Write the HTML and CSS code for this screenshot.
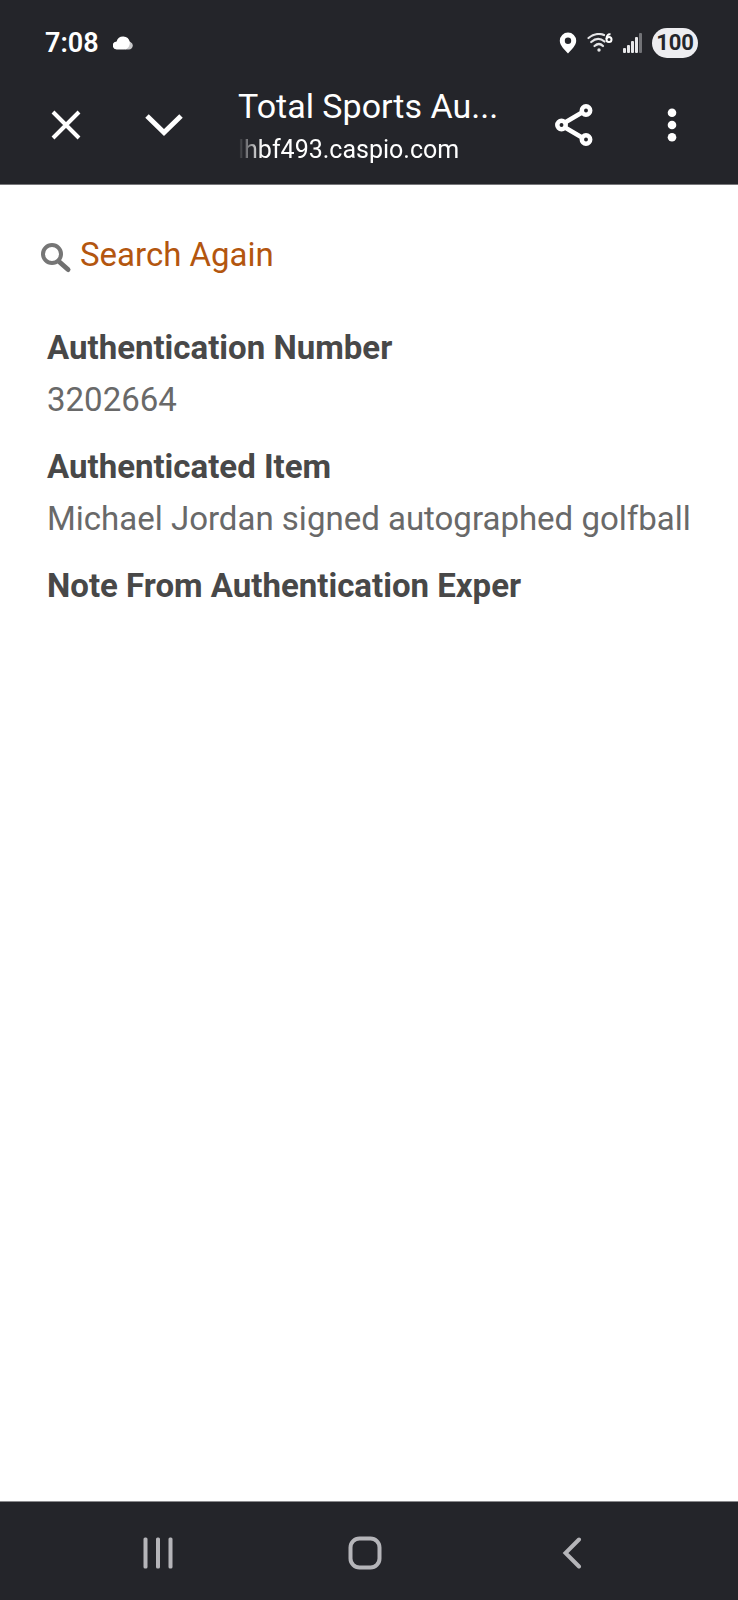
FILE: index.html
```html
<!DOCTYPE html>
<html lang="en">
<head>
    <meta charset="UTF-8">
    <meta name="viewport" content="width=device-width, initial-scale=1.0">
    <title>Total Sports Authentication</title>
    <link rel="stylesheet" href="styles.css">
</head>
<body>
    <header class="top">
        <div class="status-bar">
            <span class="time">7:08</span>
            <svg class="cloud" width="20" height="14" viewBox="0 0 20 14">
                <path d="M12 13.5h4a4 4 0 0 0 1.5-7.6L13 4z" fill="#c8c8ca"/>
                <path d="M4 13.5a4 4 0 0 1-.4-8A6.8 6.8 0 0 1 16.8 6c.4 4-2.3 7.5-5.3 7.5z" fill="#fff"/>
            </svg>
            <div class="status-icons">
                <svg width="18" height="22" viewBox="0 0 18 22">
                    <path fill="#fff" fill-rule="evenodd" d="M9 .5a8.2 8.2 0 0 1 8.2 8.2C17.2 13.5 12.5 17.5 9 21.5 5.5 17.5.8 13.5.8 8.7A8.2 8.2 0 0 1 9 .5zM9 5.5a3.2 3.2 0 1 0 0 6.4 3.2 3.2 0 0 0 0-6.4z"/>
                </svg>
                <svg width="26" height="20" viewBox="0 0 26 20">
                    <g fill="none" stroke="#e4e4e6" stroke-width="2.2" stroke-linecap="round">
                        <path d="M1.5 5Q9-1 17 2"/>
                        <path d="M4.2 9Q11 3 17.5 8.5"/>
                        <path d="M7.5 13Q12 9 16 13"/>
                    </g>
                    <circle cx="12" cy="17" r="1.7" fill="#e4e4e6"/>
                    <path d="M23.5 1.3Q19.5 1 19.5 6" fill="none" stroke="#fff" stroke-width="2"/>
                    <circle cx="22" cy="6.5" r="2.5" fill="none" stroke="#fff" stroke-width="2"/>
                </svg>
                <svg width="19" height="20" viewBox="0 0 19 20">
                    <g fill="#e8e8ea">
                        <rect x="0" y="15" width="3" height="5" rx="1"/>
                        <rect x="4" y="12" width="3" height="8" rx="1"/>
                        <rect x="8" y="8" width="3" height="12" rx="1"/>
                        <rect x="12" y="4" width="3" height="16" rx="1"/>
                    </g>
                    <rect x="16" y="0" width="3" height="20" rx="1" fill="#727377"/>
                </svg>
                <span class="battery">100</span>
            </div>
        </div>

        <div class="app-bar">
            <button class="icon-button" type="button" aria-label="Close">
                <svg width="30" height="30" viewBox="0 0 30 30">
                    <path d="M2 2l26 26M28 2L2 28" stroke="#fff" stroke-width="4"/>
                </svg>
            </button>
            <button class="icon-button" type="button" aria-label="Minimize">
                <svg width="38" height="24" viewBox="0 0 38 24">
                    <path d="M2 3l17 16.5L36 3" fill="none" stroke="#fff" stroke-width="5"/>
                </svg>
            </button>
            <div class="page-info">
                <div class="page-title">Total Sports Au...</div>
                <div class="page-url">lhbf493.caspio.com</div>
            </div>
            <button class="icon-button" type="button" aria-label="Share">
                <svg width="38" height="42" viewBox="0 0 38 42">
                    <g fill="none" stroke="#fff" stroke-width="4.5">
                        <path d="M10 18.5l17-10M10 23.5l17 10"/>
                        <circle cx="6.5" cy="21" r="4.2"/>
                        <circle cx="31" cy="6.5" r="4.2"/>
                        <circle cx="31" cy="35.5" r="4.2"/>
                    </g>
                </svg>
            </button>
            <button class="icon-button" type="button" aria-label="More options">
                <svg width="10" height="34" viewBox="0 0 10 34">
                    <g fill="#fff">
                        <circle cx="5" cy="4.7" r="4.3"/>
                        <circle cx="5" cy="17" r="4.3"/>
                        <circle cx="5" cy="29.3" r="4.3"/>
                    </g>
                </svg>
            </button>
        </div>
    </header>

    <main class="content">
        <a class="search-again" href="#">
            <svg width="32" height="38" viewBox="0 0 32 38">
                <path d="M19.5 26l8.5 7.5" stroke="#707070" stroke-width="5" stroke-linecap="round"/>
                <circle cx="12" cy="18" r="9" fill="none" stroke="#767676" stroke-width="4"/>
            </svg>
            <span>Search Again</span>
        </a>
        <dl class="details">
            <dt>Authentication Number</dt>
            <dd>3202664</dd>
            <dt>Authenticated Item</dt>
            <dd>Michael Jordan signed autographed golfball</dd>
            <dt>Note From Authentication Exper</dt>
        </dl>
    </main>

    <nav class="nav-bar">
        <button class="nav-button" type="button" aria-label="Recents">
            <svg width="30" height="32" viewBox="0 0 30 32">
                <g fill="#b5b5b9">
                    <rect x="0.5" y="0.5" width="4" height="31" rx="1.5"/>
                    <rect x="13" y="0.5" width="4" height="31" rx="1.5"/>
                    <rect x="25.5" y="0.5" width="4" height="31" rx="1.5"/>
                </g>
            </svg>
        </button>
        <button class="nav-button" type="button" aria-label="Home">
            <svg width="34" height="34" viewBox="0 0 34 34">
                <rect x="2.5" y="2.5" width="29" height="29" rx="9" fill="none" stroke="#b5b5b9" stroke-width="4"/>
            </svg>
        </button>
        <button class="nav-button" type="button" aria-label="Back">
            <svg width="20" height="32" viewBox="0 0 20 32">
                <path d="M17 2.5L3.5 16 17 29.5" fill="none" stroke="#b5b5b9" stroke-width="4" stroke-linecap="round"/>
            </svg>
        </button>
    </nav>
</body>
</html>
```
FILE: styles.css
```css
* {
    box-sizing: border-box;
}

body {
    font-family: Roboto, sans-serif;
    margin: 0;
    background-color: #fff;
    display: flex;
    flex-direction: column;
    min-height: 100vh;
}

svg {
    display: block;
    flex-shrink: 0;
}

button {
    display: flex;
    justify-content: center;
    align-items: center;
    padding: 0;
    border: none;
    background: none;
    cursor: pointer;
}

.top {
    background-color: #24252a;
    color: #fff;
    border-bottom: 1px solid #77777a;
}

.status-bar {
    display: flex;
    align-items: center;
    padding: 28px 40px 0 45px;
}

.time {
    font-size: 27px;
    line-height: 30px;
    font-weight: 600;
    margin-right: 14px;
}

.status-icons {
    display: flex;
    align-items: center;
    gap: 10px;
    margin-left: auto;
}

.battery {
    padding: 0 4px;
    border-radius: 15px;
    background-color: #ededf0;
    color: #24252a;
    font-size: 22px;
    line-height: 30px;
    font-weight: 700;
}

.app-bar {
    display: flex;
    align-items: center;
    height: 126px;
    padding: 8px 17px 0;
}

.icon-button {
    width: 98px;
    height: 98px;
    flex-shrink: 0;
}

.page-info {
    flex: 1;
    min-width: 0;
    padding: 6px 0 0 25px;
    white-space: nowrap;
}

.page-title {
    font-size: 34px;
    line-height: 44px;
}

.page-url {
    font-size: 25px;
    line-height: 44px;
    -webkit-mask-image: linear-gradient(to right, transparent, #000 24px);
    mask-image: linear-gradient(to right, transparent, #000 24px);
}

.content {
    flex: 1;
    padding: 49px 40px;
    font-size: 33px;
    color: #696969;
}

.search-again {
    display: inline-flex;
    align-items: center;
    gap: 8px;
    line-height: 42px;
    color: #b3560f;
    text-decoration: none;
}

.details {
    margin: 40px 0 0;
    padding-left: 7px;
}

.details dt {
    line-height: 52px;
    font-weight: 700;
    color: #484848;
}

.details dd {
    margin: 0 0 16px;
    line-height: 51px;
}

.nav-bar {
    display: flex;
    height: 99px;
    padding: 4px 63px 0 55px;
    background-color: #24252a;
    border-top: 1px solid #8a8a8d;
}

.nav-button {
    flex: 1;
}
```
